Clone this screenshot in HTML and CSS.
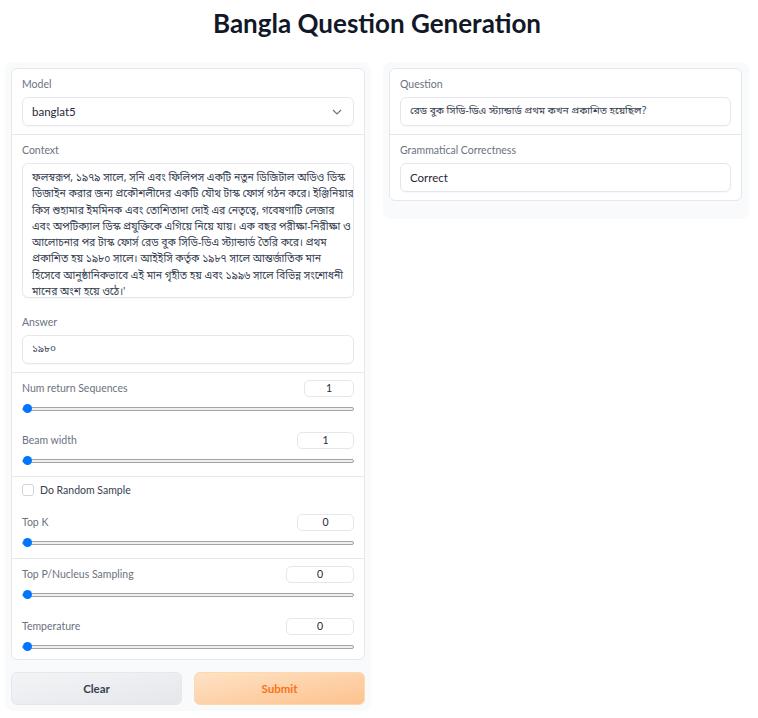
FILE: index.html
```html
<!DOCTYPE html>
<html>
<head>
<meta charset="utf-8">
<link rel="stylesheet" href="styles.css">
</head>
<body>
<h1 class="title">Bangla Question Generation</h1>
<div class="row">
  <div class="col">
    <div class="panel">
      <div class="form">
        <div class="block">
          <div class="label">Model</div>
          <div class="field select"><span>banglat5</span>
            <svg class="chev" width="10" height="6" viewBox="0 0 10 6"><path d="M1 1l4 4 4-4" fill="none" stroke="#6b7280" stroke-width="1.2"/></svg>
          </div>
        </div>
        <div class="block">
          <div class="label">Context</div>
          <div class="field textarea bn">ফলস্বরূপ, ১৯৭৯ সালে, সনি এবং ফিলিপস একটি নতুন ডিজিটাল অডিও ডিস্ক<br>ডিজাইন করার জন্য প্রকৌশলীদের একটি যৌথ টাস্ক ফোর্স গঠন করে। ইঞ্জিনিয়ার<br>কিস শুহামার ইমমিনক এবং তোশিতাদা দোই এর নেতৃত্বে, গবেষণাটি লেজার<br>এবং অপটিক্যাল ডিস্ক প্রযুক্তিকে এগিয়ে নিয়ে যায়। এক বছর পরীক্ষা-নিরীক্ষা ও<br>আলোচনার পর টাস্ক ফোর্স রেড বুক সিডি-ডিএ স্ট্যান্ডার্ড তৈরি করে। প্রথম<br>প্রকাশিত হয় ১৯৮০ সালে। আইইসি কর্তৃক ১৯৮৭ সালে আন্তর্জাতিক মান<br>হিসেবে আনুষ্ঠানিকভাবে এই মান গৃহীত হয় এবং ১৯৯৬ সালে বিভিন্ন সংশোধনী<br>মানের অংশ হয়ে ওঠে।'</div>
          <div class="label answer-label">Answer</div>
          <div class="field bn">১৯৮০</div>
        </div>
        <div class="block sliders">
          <div class="slider">
            <div class="shead"><span class="label">Num return Sequences</span><span class="num w50">1</span></div>
            <input type="range" min="1" max="10" value="1">
          </div>
          <div class="slider">
            <div class="shead"><span class="label">Beam width</span><span class="num w57">1</span></div>
            <input type="range" min="1" max="10" value="1">
          </div>
        </div>
        <div class="block sliders">
          <div class="check"><span class="box"></span><span>Do Random Sample</span></div>
          <div class="slider">
            <div class="shead"><span class="label">Top K</span><span class="num w57">0</span></div>
            <input type="range" min="0" max="100" value="0">
          </div>
        </div>
        <div class="block sliders last">
          <div class="slider">
            <div class="shead"><span class="label">Top P/Nucleus Sampling</span><span class="num w68">0</span></div>
            <input type="range" min="0" max="1" step="0.01" value="0">
          </div>
          <div class="slider">
            <div class="shead"><span class="label">Temperature</span><span class="num w68">0</span></div>
            <input type="range" min="0" max="1" step="0.01" value="0">
          </div>
        </div>
      </div>
      <div class="buttons">
        <button class="btn clear">Clear</button>
        <button class="btn submit">Submit</button>
      </div>
    </div>
  </div>
  <div class="col">
    <div class="panel right">
      <div class="form">
        <div class="block">
          <div class="label">Question</div>
          <div class="field bn">রেড বুক সিডি-ডিএ স্ট্যান্ডার্ড প্রথম কখন প্রকাশিত হয়েছিল?</div>
        </div>
        <div class="block">
          <div class="label">Grammatical Correctness</div>
          <div class="field">Correct</div>
        </div>
      </div>
    </div>
  </div>
</div>
</body>
</html>
```
FILE: styles.css
```css
* { box-sizing: border-box; }
body {
  margin: 0;
  padding: 0 9px 0 5px;
  font-family: "Lato", "Open Sans", "Noto Sans Bengali", "Noto Sans", sans-serif;
  color: #1f2937;
  background: #fff;
}
.title {
  margin: 0;
  height: 62px;
  padding-top: 7px;
  text-align: center;
  font-size: 26px;
  font-weight: 700;
  color: #111827;
  line-height: 32px;
}
.row {
  display: flex;
  gap: 12px;
  align-items: flex-start;
}
.col { flex: 1; min-width: 0; }
.panel {
  background: #f9fafb;
  border-radius: 8px;
  padding: 6px;
}
.panel.right { padding: 6px 7px 18px 6px; }
.form {
  background: #fff;
  border: 1px solid #e5e7eb;
  border-radius: 6px;
}
.block {
  padding: 8px 10px;
  border-top: 1px solid #e5e7eb;
}
.block:first-child { border-top: none; }
.label {
  display: block;
  font-size: 10.5px;
  line-height: 14px;
  color: #6b7280;
  margin-bottom: 6px;
}
.field {
  border: 1px solid #e5e7eb;
  border-radius: 6px;
  height: 29px;
  padding: 0 9px;
  display: flex;
  align-items: center;
  font-size: 11.5px;
  color: #1f2937;
  box-shadow: 0 1px 1px rgba(0,0,0,0.03);
}
.bn {
  font-family: "Noto Sans Bengali", "Lohit Bengali", "Noto Sans", sans-serif;
  font-size: 10.2px;
  color: #374151;
}
.select { justify-content: space-between; padding-right: 11px; }
.textarea {
  display: block;
  height: 135px;
  padding: 6px 6px 6px 9px;
  font-size: 10.4px;
  line-height: 16.3px;
  white-space: nowrap;
  overflow: hidden;
}
.answer-label { margin-top: 17px; }
.sliders { padding: 7px 10px 8px; }
.sliders.last { padding-bottom: 5px; }
.slider + .slider { margin-top: 16px; }
.shead {
  display: flex;
  justify-content: space-between;
  align-items: flex-start;
  height: 17px;
}
.shead .label { margin: 1px 0 0; }
.num {
  height: 17px;
  border: 1px solid #e5e7eb;
  border-radius: 5px;
  font-size: 10.5px;
  line-height: 15px;
  text-align: center;
  color: #1f2937;
}
.w50 { width: 50px; }
.w57 { width: 57px; }
.w68 { width: 68px; }
input[type=range] {
  -webkit-appearance: none;
  appearance: none;
  display: block;
  width: 100%;
  margin: 4px 0 0;
  height: 15px;
  background: transparent;
}
input[type=range]::-webkit-slider-runnable-track {
  height: 4px;
  border: 1px solid #a3a3a3;
  border-radius: 3px;
  background: #efefef;
}
input[type=range]::-webkit-slider-thumb {
  -webkit-appearance: none;
  width: 9px;
  height: 9px;
  margin-top: -3.5px;
  border-radius: 50%;
  background: #0075ff;
  border: none;
}
.check {
  display: flex;
  align-items: center;
  gap: 6px;
  height: 12px;
  font-size: 10.5px;
  color: #374151;
  margin-bottom: 18px;
}
.box {
  width: 12px;
  height: 12px;
  border: 1px solid #d1d5db;
  border-radius: 3px;
  background: #fff;
}
.buttons {
  display: flex;
  gap: 12px;
  margin-top: 12px;
}
.btn {
  flex: 1;
  height: 33px;
  border-radius: 6px;
  font-family: inherit;
  font-size: 11.5px;
  font-weight: 700;
  cursor: pointer;
}
.clear {
  background: linear-gradient(to bottom right, #f3f4f6, #e5e7eb);
  border: 1px solid #e5e7eb;
  color: #374151;
}
.submit {
  background: linear-gradient(to bottom right, #fee2c6, #fdc28e);
  border: 1px solid #fed7aa;
  color: #f97316;
}
```
